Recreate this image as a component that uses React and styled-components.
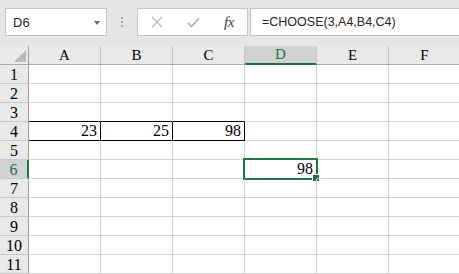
import React from "react";
import styled, { createGlobalStyle, css } from "styled-components";

const Global = createGlobalStyle`
  html, body { margin: 0; padding: 0; background: #fff; }
  body { width: 459px; height: 274px; overflow: hidden; }
`;

const GREEN = "#217346";
const GRID = "#d4d4d4";

const Page = styled.div`
  width: 459px;
  height: 274px;
  overflow: hidden;
  background: #fff;
`;

const Toolbar = styled.div`
  display: flex;
  align-items: flex-start;
  height: 46px;
  box-sizing: border-box;
  padding: 8px 0 0 5px;
  background: #e6e6e6;
`;

const Box = styled.div`
  display: flex;
  align-items: center;
  height: 28px;
  box-sizing: border-box;
  background: #fff;
  border: 1px solid #c6c6c6;
  font-family: "Liberation Sans", Arial, sans-serif;
  font-size: 12.5px;
  color: #262626;
`;

const NameBox = styled(Box)`
  width: 102px;
  padding: 0 6px 0 7px;
  justify-content: space-between;
  font-size: 13px;
`;

const Caret = styled.span`
  width: 0;
  height: 0;
  border-left: 3.5px solid transparent;
  border-right: 3.5px solid transparent;
  border-top: 4px solid #6b6b6b;
  margin-top: 1px;
`;

const Grip = styled.div`
  width: 30px;
  height: 28px;
  display: flex;
  flex-direction: column;
  align-items: center;
  justify-content: center;
  gap: 2px;
  span {
    width: 2px;
    height: 2px;
    background: #a8a8a8;
  }
`;

const FxBox = styled(Box)`
  width: 111px;
  padding-left: 13px;
  gap: 24px;
`;

const Fx = styled.span`
  font-family: "Liberation Serif", serif;
  font-style: italic;
  font-size: 15px;
  color: #3a3a3a;
  letter-spacing: -0.5px;
`;

const FormulaBox = styled(Box)`
  flex: 1;
  margin-left: 2px;
  padding-left: 11px;
  border-right: none;
`;

const Sheet = styled.div`
  display: grid;
  grid-template-columns: 29px repeat(6, 72px);
  grid-auto-rows: 19px;
  font-family: "Liberation Serif", "Times New Roman", serif;
  font-size: 16px;
  color: #000;
`;

const Head = styled.div`
  box-sizing: border-box;
  display: flex;
  align-items: center;
  justify-content: center;
  background: #e9e9e9;
  border-right: 1px solid #c6c6c6;
  border-bottom: 1px solid #ababab;
  font-size: 15px;
  ${(p) =>
    p.$active &&
    css`
      background: #d2d2d2;
      color: ${GREEN};
      border-bottom: 2px solid ${GREEN};
    `}
`;

const Corner = styled(Head)`
  border-right: 1px solid #9e9e9e;
  justify-content: flex-end;
  align-items: flex-end;
  padding: 0 2px 2px 0;
`;

const RowHead = styled.div`
  box-sizing: border-box;
  display: flex;
  align-items: center;
  justify-content: center;
  padding-top: 1px;
  background: #e9e9e9;
  border-right: 1px solid #9e9e9e;
  border-bottom: 1px solid #c9c9c9;
  ${(p) =>
    p.$active &&
    css`
      background: #d2d2d2;
      color: ${GREEN};
      border-right: 2px solid ${GREEN};
    `}
`;

const Cell = styled.div`
  position: relative;
  box-sizing: border-box;
  display: flex;
  align-items: flex-end;
  justify-content: flex-end;
  padding: 0 3px 0 0;
  border-right: 1px solid ${(p) => (p.$right ? "#000" : GRID)};
  border-bottom: 1px solid ${(p) => (p.$bottom ? "#000" : GRID)};
`;

const Selection = styled.div`
  position: absolute;
  top: -2px;
  left: -2px;
  right: -2px;
  bottom: -2px;
  border: 2px solid ${GREEN};
  pointer-events: none;
`;

const Handle = styled.div`
  position: absolute;
  right: -4px;
  bottom: -4px;
  width: 6px;
  height: 6px;
  background: ${GREEN};
  border: 1px solid #fff;
`;

const cols = ["A", "B", "C", "D", "E", "F"];
const values = { "4": { A: 23, B: 25, C: 98 }, "6": { D: 98 } };

const Cross = () => (
  <svg width="12" height="12" viewBox="0 0 12 12">
    <path d="M1 1 L11 11 M11 1 L1 11" stroke="#b4b4b4" strokeWidth="1.2" fill="none" />
  </svg>
);

const Check = () => (
  <svg width="13" height="11" viewBox="0 0 13 11">
    <path d="M1 6 L4.5 9.5 L12 1.5" stroke="#b4b4b4" strokeWidth="1.8" fill="none" />
  </svg>
);

const CornerMark = () => (
  <svg width="12" height="12" viewBox="0 0 12 12">
    <path d="M12 0 L12 12 L0 12 Z" fill="#b9b9b9" />
  </svg>
);

export default function App() {
  const rows = Array.from({ length: 11 }, (_, i) => String(i + 1));
  return (
    <Page>
      <Global />
      <Toolbar>
        <NameBox>
          <span>D6</span>
          <Caret />
        </NameBox>
        <Grip>
          <span />
          <span />
          <span />
        </Grip>
        <FxBox>
          <Cross />
          <Check />
          <Fx>fx</Fx>
        </FxBox>
        <FormulaBox>=CHOOSE(3,A4,B4,C4)</FormulaBox>
      </Toolbar>
      <Sheet>
        <Corner>
          <CornerMark />
        </Corner>
        {cols.map((c) => (
          <Head key={c} $active={c === "D"}>
            {c}
          </Head>
        ))}
        {rows.map((r) => (
          <React.Fragment key={r}>
            <RowHead $active={r === "6"}>{r}</RowHead>
            {cols.map((c) => {
              const inBox = ["A", "B", "C"].includes(c);
              return (
                <Cell
                  key={c}
                  $right={r === "4" && inBox}
                  $bottom={(r === "3" || r === "4") && inBox}
                >
                  {values[r] && values[r][c]}
                  {r === "6" && c === "D" && (
                    <Selection>
                      <Handle />
                    </Selection>
                  )}
                </Cell>
              );
            })}
          </React.Fragment>
        ))}
      </Sheet>
    </Page>
  );
}
